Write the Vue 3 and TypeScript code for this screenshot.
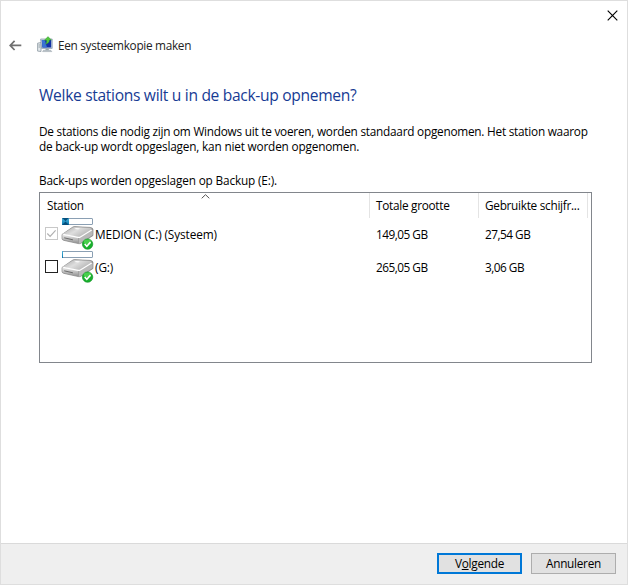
<script setup lang="ts">
interface Drive {
  name: string
  total: string
  used: string
  fill: number
  checked: boolean
  locked: boolean
}

const drives: Drive[] = [
  { name: 'MEDION (C:) (Systeem)', total: '149,05 GB', used: '27,54 GB', fill: 7, checked: true, locked: true },
  { name: '(G:)', total: '265,05 GB', used: '3,06 GB', fill: 1, checked: false, locked: false },
]
</script>

<template>
  <div class="window">
    <button class="close" aria-label="Sluiten">
      <svg width="11" height="11" viewBox="0 0 11 11"><path d="M.7.7l9.6 9.6M10.3.7L.7 10.3" stroke="#000" stroke-width="1.15" fill="none" /></svg>
    </button>
    <header class="titlebar">
      <svg class="back" width="13" height="11" viewBox="0 0 13 11"><path d="M5.6.8L1.2 5.4l4.4 4.6M1.2 5.4H12.3" fill="none" stroke="#707070" stroke-width="1.7" /></svg>
      <svg class="app-icon" width="17" height="17" viewBox="0 0 17 17">
        <path d="M.6 7.2L4 6.5v9l-3.4-.4z" fill="#e4e9ec" stroke="#8b98a2" stroke-width=".8" />
        <path d="M1.5 9h1.6M1.5 11h1.6" stroke="#6f7e88" stroke-width=".7" />
        <path d="M3.6 3h11.6v9.4H4.6z" fill="#c9d6e2" stroke="#8294a8" stroke-width=".7" />
        <path d="M4.8 4h9.4v7.4H5.4z" fill="#1231a4" />
        <path d="M4.8 4h3l2.2 7.4H5.4z" fill="#3a72d4" />
        <path d="M8.6 12.6h3l.4 2H8.4z" fill="#98a5ae" />
        <path d="M6.4 14.3h7.4l1 1.3H5.6z" fill="#ccd2d6" stroke="#8996a0" stroke-width=".5" />
        <path d="M8.4 8.2C9.6 7 9.8 5.8 9.5 4.3H7.4L11 .6l3.4 3.5h-2c.1 2.2-1.4 3.7-4 4.1z" fill="#55c83e" stroke="#2c8f35" stroke-width=".4" />
      </svg>
      <span class="title">Een systeemkopie maken</span>
    </header>

    <main class="content">
      <h1>Welke stations wilt u in de back-up opnemen?</h1>
      <p class="intro">
        <span class="line first">De stations die nodig zijn om Windows uit te voeren, worden standaard opgenomen. Het station waarop</span>
        <span class="line second">de back-up wordt opgeslagen, kan niet worden opgenomen.</span>
      </p>
      <p class="target">Back-ups worden opgeslagen op Backup (E:).</p>

      <section class="list">
        <div class="row head">
          <div class="cell sorted">Station
            <svg class="sort" width="9" height="5" viewBox="0 0 9 5"><path d="M.7 4.3l3.8-3.6 3.8 3.6" fill="none" stroke="#555" /></svg>
          </div>
          <div class="cell total">Totale grootte</div>
          <div class="cell used">Gebruikte schijfr...</div>
        </div>
        <div v-for="drive in drives" :key="drive.name" class="row drive">
          <div class="cell station">
            <span class="check" :class="{ locked: drive.locked }">
              <svg v-if="drive.checked" width="11" height="11" viewBox="0 0 11 11"><path d="M1.3 5.5l2.8 2.8 5.5-6" fill="none" stroke="#b0b0b0" stroke-width="1.2" /></svg>
            </span>
            <svg class="disk" width="34" height="33" viewBox="0 0 34 33">
              <defs>
                <linearGradient id="top" x1="0" y1="0" x2="1" y2=".6">
                  <stop offset="0" stop-color="#a5a5a5" /><stop offset=".5" stop-color="#dedede" /><stop offset="1" stop-color="#b0b0b0" />
                </linearGradient>
                <linearGradient id="front" x1="0" y1="0" x2="0" y2="1">
                  <stop offset="0" stop-color="#eeeeee" /><stop offset="1" stop-color="#929292" />
                </linearGradient>
                <linearGradient id="usage" x1="0" y1="0" x2="0" y2="1">
                  <stop offset="0" stop-color="#4cb4dc" /><stop offset="1" stop-color="#0878ae" />
                </linearGradient>
              </defs>
              <rect x="1.5" y="1.5" width="30" height="6" rx=".5" fill="#fff" stroke="#8a9fb3" />
              <rect x="1" y="1" :width="drive.fill" height="7" fill="url(#usage)" />
              <path v-if="drive.fill > 2" d="M1 1l3.5 3L8 1zM1 8l3.5-3.5L8 8z" fill="#064e7c" />
              <path d="M1 17.5L11.5 10.2q1-.7 2.3-.6L29 10.4q3 .2 3 2.2v5.9L20 26.2q-1.2.7-2.7.4L3 23.4q-2-.5-2-2z" fill="#9a9a9a" stroke="#777" stroke-width=".6" />
              <path d="M1.5 17L11.8 10.4q1-.6 2-.5l15 1q3.2.4 1 2L19.5 19.9q-1 .6-2.3.4z" fill="url(#top)" />
              <path d="M1.3 17.2l16 3.1v6L3 23q-1.7-.5-1.7-1.8z" fill="url(#front)" />
              <path d="M18 20.5q1 0 1.8-.5l11.8-7.3v5.4l-12 7.8q-.8.5-1.6.5z" fill="#b9b9b9" />
              <path d="M2.2 17.4l14.9 3q1.4.2 2.3-.4L30.7 13" fill="none" stroke="#fff" stroke-width="1.2" />
              <path d="M3.2 20.8l8.7 2" stroke="#555" stroke-width=".8" />
              <path d="M15 11l4 .3-1.8 1.1-4-.3z" fill="#fafafa" />
              <circle cx="26.6" cy="27.1" r="5.2" fill="#18b02c" stroke="#0a8e20" stroke-width=".6" />
              <ellipse cx="26.4" cy="24.9" rx="3.7" ry="2.3" fill="#48cf4b" />
              <path d="M23.7 27l2.1 2.3 3.7-4.2" fill="none" stroke="#fff" stroke-width="1.6" />
            </svg>
            <span class="name">{{ drive.name }}</span>
          </div>
          <div class="cell total">{{ drive.total }}</div>
          <div class="cell used">{{ drive.used }}</div>
        </div>
      </section>
    </main>

    <footer class="actions">
      <button class="btn primary"><span>V<u>o</u>lgende</span></button>
      <button class="btn"><span>Annuleren</span></button>
    </footer>
  </div>
</template>

<style>
body { background: #fff; }
</style>

<style scoped>
.window {
  box-sizing: border-box;
  display: flex;
  flex-direction: column;
  width: 628px;
  height: 585px;
  border: 1px solid #dedede;
  background: #fff;
  color: #000;
  font: 11.8px/15px "Open Sans", "Noto Sans", sans-serif;
  letter-spacing: -.28px;
  white-space: nowrap;
}
button { font: inherit; letter-spacing: inherit; color: inherit; padding: 0; border: 0; background: none; }
.close { align-self: flex-end; width: 11px; height: 11px; margin: 9px 9px 0 0; }
svg { display: block; }
.titlebar { display: flex; align-items: center; height: 20px; margin-top: 14px; padding-left: 8px; }
.app-icon { margin-left: 15px; margin-top: -1px; }
.title { margin-left: 4px; color: #222; letter-spacing: -.3px; }
.content { flex: 1; padding: 30px 35px 0 38px; }
h1 { margin: 0; font-size: 15.6px; line-height: 20px; font-weight: 400; color: #173b94; letter-spacing: -.32px; }
p { margin: 0; }
.intro { margin-top: 19px; }
.line { display: block; }
.first { letter-spacing: -.24px; }
.second { letter-spacing: -.18px; }
.target { margin-top: 19px; letter-spacing: -.16px; }
.list { box-sizing: border-box; width: 553px; height: 171px; margin-top: 4px; border: 1px solid #82868c; }
.row { display: grid; grid-template-columns: 330px 109px 109px; }
.head { height: 25px; line-height: 25px; }
.head .cell { position: relative; box-sizing: border-box; border-right: 1px solid #e4e4e4; }
.head .sorted { padding-left: 7px; }
.total, .used { padding-left: 6px; }
.sort { position: absolute; left: 161px; top: 1px; }
.drive { height: 33px; line-height: 33px; }
.drive .total, .drive .used { letter-spacing: -.5px; }
.station { display: flex; align-items: center; padding-left: 5px; }
.check { box-sizing: border-box; width: 13px; height: 13px; border: 1px solid #222; margin-top: -2px; }
.check.locked { border-color: #c8c8c8; }
.disk { margin: -2px 0 0 3px; }
.name { letter-spacing: -.1px; }
.actions { display: flex; justify-content: flex-end; gap: 9px; height: 41px; padding: 9px 11px 0 0; box-sizing: border-box; background: #efefef; border-top: 1px solid #dadada; }
.btn { box-sizing: border-box; width: 85px; height: 21px; border: 1px solid #adadad; background: #e1e1e1; }
.primary { border: 2px solid #0078d7; }
u { text-underline-offset: 1px; }
</style>
